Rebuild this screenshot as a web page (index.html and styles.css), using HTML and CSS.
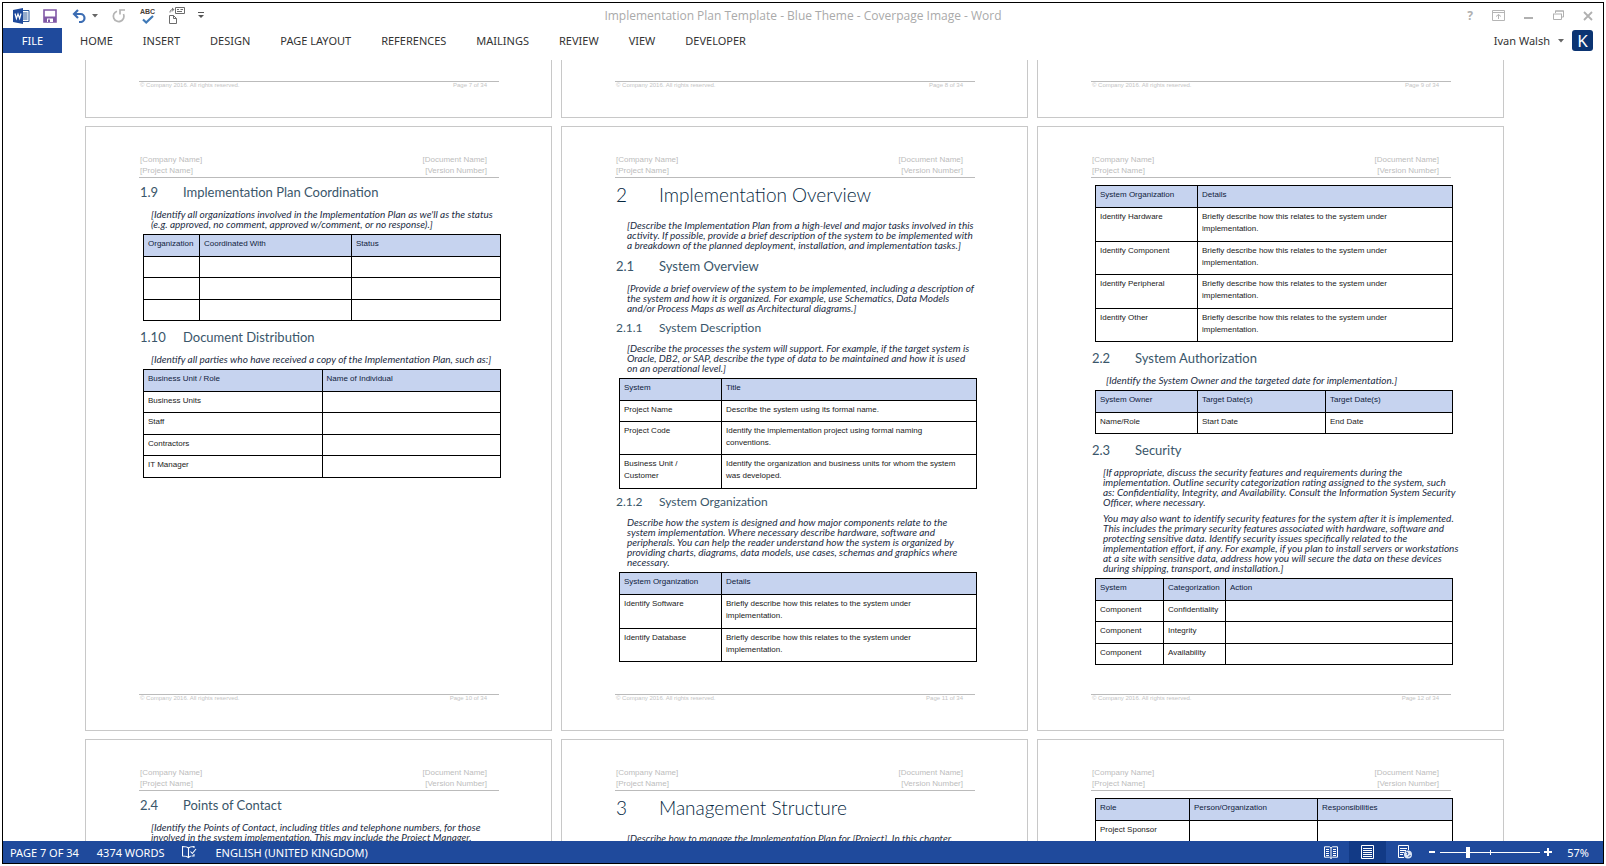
FILE: index.html
```html
<!DOCTYPE html>
<html lang="en-GB">
<head>
<meta charset="utf-8">
<title>Implementation Plan Template - Blue Theme - Coverpage Image - Word</title>
<link rel="stylesheet" href="styles.css">
</head>
<body>
<div class="window">
  <header class="titlebar">
    <div class="quick-access">
      <button class="icon-btn word" aria-label="Word"><svg width="17" height="16" viewBox="0 0 17 16"><path d="M8 2.5h8v11H8z" fill="#fff" stroke="#2a5699"/><path d="M9 5h5.500M9 7h5.500M9 9h5.500M9 11h5.500" stroke="#2a5699"/><path d="M0 2l10-2v16L0 14z" fill="#1f4a9c"/><path d="M2 5.500l1.400 5L5 6l1.600 4.500L8 5.500" fill="none" stroke="#fff" stroke-width="1.200"/></svg></button>
      <button class="icon-btn save" aria-label="Save"><svg width="14" height="14" viewBox="0 0 14 14"><path d="M1 1h12v12H1z" fill="#fff" stroke="#8058a5" stroke-width="1.600"/><path d="M1 7.500h12V13H1z" fill="#8058a5"/><path d="M4 9.500h6V13H4z" fill="#fff"/><path d="M5 10.500h2V13H5z" fill="#8058a5"/></svg></button>
      <button class="icon-btn undo" aria-label="Undo"><svg width="15" height="14" viewBox="0 0 15 14"><path d="M6 1L2 5l4 4M2 5h6.500a4 4 0 0 1 0 8H7" fill="none" stroke="#3c6db3" stroke-width="2.200"/></svg></button>
      <button class="icon-btn undo-more" aria-label="Undo history"><svg width="6" height="4" viewBox="0 0 6 4"><path d="M0 0h6L3 3.500z" fill="#666"/></svg></button>
      <button class="icon-btn redo" aria-label="Repeat"><svg width="14" height="14" viewBox="0 0 14 14"><path d="M5 2.200A5.300 5.300 0 1 0 11.500 5M8 5.500V1h5" fill="none" stroke="#b4b4b4" stroke-width="1.700"/></svg></button>
      <button class="icon-btn spell" aria-label="Spelling"><span class="abc">ABC</span><svg width="12" height="9" viewBox="0 0 12 9"><path d="M1 4.500l3.200 3L11 1" fill="none" stroke="#3f79b7" stroke-width="2.200"/></svg></button>
      <button class="icon-btn envelope" aria-label="Envelopes"><svg width="17" height="17" viewBox="0 0 17 17"><path d="M7.500.5h9v6h-9zM9 2.500h2M12.500 2.500h2.500M9 4.500h5M1.500 8.500h4l3 3v5h-7zM5.500 8.500v3h3" fill="none" stroke="#6c6c6c"/><path d="M2 5.500c0-2 1-3 3.500-3M4 1l1.800 1.500L4 4.500" fill="none" stroke="#6c6c6c"/></svg></button>
      <button class="icon-btn customize" aria-label="Customize toolbar"><svg width="6" height="7" viewBox="0 0 6 7"><path d="M0 .5h6" stroke="#555"/><path d="M0 3h6L3 6z" fill="#555"/></svg></button>
    </div>
    <h1 class="doc-title">Implementation Plan Template - Blue Theme - Coverpage Image - Word</h1>
    <div class="window-controls">
      <button class="icon-btn help" aria-label="Help">?</button>
      <button class="icon-btn" aria-label="Ribbon display"><svg width="13" height="11" viewBox="0 0 13 11"><path d="M.5.500h12v10H.5zM.5 2.500h12M6.500 9V4.500M4 6.500l2.500-2L9 6.500" fill="none" stroke="#b5b5b5"/></svg></button>
      <button class="icon-btn" aria-label="Minimize"><svg width="10" height="11" viewBox="0 0 10 11"><path d="M0 8h9" stroke="#b0b0b0" stroke-width="2"/></svg></button>
      <button class="icon-btn" aria-label="Restore"><svg width="11" height="11" viewBox="0 0 11 11"><path d="M2.500 3V1h8v6h-2M2 1h9M0 4h9M.5 4v5.500h8V4" fill="none" stroke="#b0b0b0"/></svg></button>
      <button class="icon-btn" aria-label="Close"><svg width="10" height="10" viewBox="0 0 10 10"><path d="M1 1l8 8M9 1L1 9" stroke="#b0b0b0" stroke-width="1.800"/></svg></button>
    </div>
  </header>
  <nav class="ribbon">
    <button class="file-tab">FILE</button>
    <button class="tab">HOME</button>
    <button class="tab">INSERT</button>
    <button class="tab">DESIGN</button>
    <button class="tab">PAGE LAYOUT</button>
    <button class="tab">REFERENCES</button>
    <button class="tab">MAILINGS</button>
    <button class="tab">REVIEW</button>
    <button class="tab">VIEW</button>
    <button class="tab">DEVELOPER</button>
    <button class="account">Ivan Walsh<svg width="6" height="4" viewBox="0 0 6 4"><path d="M0 0h6L3 3.500z" fill="#666"/></svg><span class="avatar">K</span></button>
  </nav>

  <main class="canvas">
    <div class="page-row">
      <article class="page tail"><footer class="page-foot"><span>© Company 2016. All rights reserved.</span><span>Page 7 of 34</span></footer></article>
      <article class="page tail"><footer class="page-foot"><span>© Company 2016. All rights reserved.</span><span>Page 8 of 34</span></footer></article>
      <article class="page tail"><footer class="page-foot"><span>© Company 2016. All rights reserved.</span><span>Page 9 of 34</span></footer></article>
    </div>

    <div class="page-row">
      <article class="page">
        <header class="page-head"><div>[Company Name]<br>[Project Name]</div><div class="end">[Document Name]<br>[Version Number]</div></header>
        <section class="content">
          <h3><span class="num">1.9</span>Implementation Plan Coordination</h3>
          <p>[Identify all organizations involved in the Implementation Plan as we'll as the status<br>(e.g. approved, no comment, approved w/comment, or no response).]</p>
          <table>
            <colgroup><col class="w56"><col class="w152"><col></colgroup>
            <thead><tr><th>Organization</th><th>Coordinated With</th><th>Status</th></tr></thead>
            <tbody><tr><td></td><td></td><td></td></tr><tr><td></td><td></td><td></td></tr><tr><td></td><td></td><td></td></tr></tbody>
          </table>
          <h3><span class="num">1.10</span>Document Distribution</h3>
          <p>[Identify all parties who have received a copy of the Implementation Plan, such as:]</p>
          <table>
            <colgroup><col class="half"><col></colgroup>
            <thead><tr><th>Business Unit / Role</th><th>Name of Individual</th></tr></thead>
            <tbody><tr><td>Business Units</td><td></td></tr><tr><td>Staff</td><td></td></tr><tr><td>Contractors</td><td></td></tr><tr><td>IT Manager</td><td></td></tr></tbody>
          </table>
        </section>
        <footer class="page-foot"><span>© Company 2016. All rights reserved.</span><span>Page 10 of 34</span></footer>
      </article>

      <article class="page">
        <header class="page-head"><div>[Company Name]<br>[Project Name]</div><div class="end">[Document Name]<br>[Version Number]</div></header>
        <section class="content">
          <h2><span class="num">2</span>Implementation Overview</h2>
          <p>[Describe the Implementation Plan from a high-level and major tasks involved in this<br>activity. If possible, provide a brief description of the system to be implemented with<br>a breakdown of the planned deployment, installation, and implementation tasks.]</p>
          <h3><span class="num">2.1</span>System Overview</h3>
          <p>[Provide a brief overview of the system to be implemented, including a description of<br>the system and how it is organized. For example, use Schematics, Data Models<br>and/or Process Maps as well as Architectural diagrams.]</p>
          <h4><span class="num">2.1.1</span>System Description</h4>
          <p>[Describe the processes the system will support. For example, if the target system is<br>Oracle, DB2, or SAP, describe the type of data to be maintained and how it is used<br>on an operational level.]</p>
          <table>
            <colgroup><col class="w102"><col></colgroup>
            <thead><tr><th>System</th><th>Title</th></tr></thead>
            <tbody><tr><td>Project Name</td><td>Describe the system using its formal name.</td></tr>
            <tr class="tall"><td>Project Code</td><td>Identify the implementation project using formal naming<br>conventions.</td></tr>
            <tr class="tall"><td>Business Unit /<br>Customer</td><td>Identify the organization and business units for whom the system<br>was developed.</td></tr></tbody>
          </table>
          <h4><span class="num">2.1.2</span>System Organization</h4>
          <p>Describe how the system is designed and how major components relate to the<br>system implementation. Where necessary describe hardware, software and<br>peripherals. You can help the reader understand how the system is organized by<br>providing charts, diagrams, data models, use cases, schemas and graphics where<br>necessary.</p>
          <table>
            <colgroup><col class="w102"><col></colgroup>
            <thead><tr><th>System Organization</th><th>Details</th></tr></thead>
            <tbody><tr class="tall"><td>Identify Software</td><td>Briefly describe how this relates to the system under<br>implementation.</td></tr>
            <tr class="tall"><td>Identify Database</td><td>Briefly describe how this relates to the system under<br>implementation.</td></tr></tbody>
          </table>
        </section>
        <footer class="page-foot"><span>© Company 2016. All rights reserved.</span><span>Page 11 of 34</span></footer>
      </article>

      <article class="page">
        <header class="page-head"><div>[Company Name]<br>[Project Name]</div><div class="end">[Document Name]<br>[Version Number]</div></header>
        <section class="content">
          <table>
            <colgroup><col class="w102"><col></colgroup>
            <thead><tr><th>System Organization</th><th>Details</th></tr></thead>
            <tbody><tr class="tall"><td>Identify Hardware</td><td>Briefly describe how this relates to the system under<br>implementation.</td></tr>
            <tr class="tall"><td>Identify Component</td><td>Briefly describe how this relates to the system under<br>implementation.</td></tr>
            <tr class="tall"><td>Identify Peripheral</td><td>Briefly describe how this relates to the system under<br>implementation.</td></tr>
            <tr class="tall"><td>Identify Other</td><td>Briefly describe how this relates to the system under<br>implementation.</td></tr></tbody>
          </table>
          <h3><span class="num">2.2</span>System Authorization</h3>
          <p class="indented">[Identify the System Owner and the targeted date for implementation.]</p>
          <table>
            <colgroup><col class="w102"><col class="w128"><col></colgroup>
            <thead><tr><th>System Owner</th><th>Target Date(s)</th><th>Target Date(s)</th></tr></thead>
            <tbody><tr><td>Name/Role</td><td>Start Date</td><td>End Date</td></tr></tbody>
          </table>
          <h3><span class="num">2.3</span>Security</h3>
          <p>[If appropriate, discuss the security features and requirements during the<br>implementation. Outline security categorization rating assigned to the system, such<br>as: Confidentiality, Integrity, and Availability. Consult the Information System Security<br>Officer, where necessary.</p>
          <p>You may also want to identify security features for the system after it is implemented.<br>This includes the primary security features associated with hardware, software and<br>protecting sensitive data. Identify security issues specifically related to the<br>implementation effort, if any. For example, if you plan to install servers or workstations<br>at a site with sensitive data, address how you will secure the data on these devices<br>during shipping, transport, and installation.]</p>
          <table>
            <colgroup><col class="w68"><col class="w62"><col></colgroup>
            <thead><tr><th>System</th><th>Categorization</th><th>Action</th></tr></thead>
            <tbody><tr><td>Component</td><td>Confidentiality</td><td></td></tr><tr><td>Component</td><td>Integrity</td><td></td></tr><tr><td>Component</td><td>Availability</td><td></td></tr></tbody>
          </table>
        </section>
        <footer class="page-foot"><span>© Company 2016. All rights reserved.</span><span>Page 12 of 34</span></footer>
      </article>
    </div>

    <div class="page-row">
      <article class="page">
        <header class="page-head"><div>[Company Name]<br>[Project Name]</div><div class="end">[Document Name]<br>[Version Number]</div></header>
        <section class="content">
          <h3><span class="num">2.4</span>Points of Contact</h3>
          <p>[Identify the Points of Contact, including titles and telephone numbers, for those<br>involved in the system implementation. This may include the Project Manager,</p>
        </section>
      </article>
      <article class="page">
        <header class="page-head"><div>[Company Name]<br>[Project Name]</div><div class="end">[Document Name]<br>[Version Number]</div></header>
        <section class="content">
          <h2><span class="num">3</span>Management Structure</h2>
          <p>[Describe how to manage the Implementation Plan for [Project]. In this chapter,</p>
        </section>
      </article>
      <article class="page">
        <header class="page-head"><div>[Company Name]<br>[Project Name]</div><div class="end">[Document Name]<br>[Version Number]</div></header>
        <section class="content">
          <table>
            <colgroup><col class="w94"><col class="w128"><col></colgroup>
            <thead><tr><th>Role</th><th>Person/Organization</th><th>Responsibilities</th></tr></thead>
            <tbody><tr><td>Project Sponsor</td><td></td><td></td></tr><tr><td></td><td></td><td></td></tr></tbody>
          </table>
        </section>
      </article>
    </div>
  </main>

  <footer class="statusbar">
    <button class="status-item">PAGE 7 OF 34</button>
    <button class="status-item">4374 WORDS</button>
    <button class="status-item" aria-label="Proofing"><svg width="15" height="14" viewBox="0 0 15 14"><path d="M6.500 3v9.500M6.500 3C5 1.500 3 1.500.5 1.500v9.500c2.500 0 4.500 0 6 1.500 1-1 2-1.500 3-1.500M6.500 3C8 1.500 10 1.500 12 1.500v1.500M8.500 6.500l1.800 2L14 4M10 11h2v-2" fill="none" stroke="#fff" stroke-width="1.100"/></svg></button>
    <button class="status-item">ENGLISH (UNITED KINGDOM)</button>
    <div class="view-tools">
      <button class="view" aria-label="Read mode"><svg width="14" height="13" viewBox="0 0 14 13"><path d="M7 2v10.500M7 2L5.500.8H.5v10.400h5L7 12.500l1.500-1.300h5V.8h-5zM2 3.500h3M2 5.500h3M2 7.500h3M2 9.500h3M9 3.500h3M9 5.500h3M9 7.500h3M9 9.500h3" fill="none" stroke="#fff"/></svg></button>
      <button class="view selected" aria-label="Print layout"><svg width="13" height="14" viewBox="0 0 13 14"><path d="M.5.500h12v13H.5zM2 3.500h9M2 5.500h9M2 7.500h9M2 9.500h9M2 11.500h9" fill="none" stroke="#fff"/></svg></button>
      <button class="view" aria-label="Web layout"><svg width="14" height="14" viewBox="0 0 14 14"><path d="M6 12.500H.5V.5h10V5M2 3.500h7M2 5.500h6M2 7.500h4M2 9.500h3" fill="none" stroke="#fff"/><circle cx="10" cy="9.500" r="4" fill="#dbe5f5"/><path d="M8 7l2 1-1 2M10.500 12l2-2" stroke="#1f4a9c" fill="none"/></svg></button>
      <button class="zoom-step out" aria-label="Zoom out"><svg width="8" height="8" viewBox="0 0 8 8"><path d="M1 4h6" stroke="#fff" stroke-width="2"/></svg></button>
      <input class="zoom-slider" type="range" min="0" max="100" value="27" aria-label="Zoom">
      <button class="zoom-step" aria-label="Zoom in"><svg width="8" height="8" viewBox="0 0 8 8"><path d="M0 4h8M4 0v8" stroke="#fff" stroke-width="2"/></svg></button>
      <button class="zoom-value">57%</button>
    </div>
  </footer>
</div>
</body>
</html>
```
FILE: styles.css
```css
* { box-sizing: border-box; }
body {
  margin: 0;
  padding: 2px;
  height: 100vh;
  background: #fff;
  font-family: "Noto Sans", "Open Sans", sans-serif;
  font-size: 11px;
  color: #333;
}
button {
  border: 0;
  padding: 0;
  margin: 0;
  background: none;
  font: inherit;
  color: inherit;
  white-space: nowrap;
}
svg { display: block; }

.window {
  height: 100%;
  border: 1px solid #000;
  display: flex;
  flex-direction: column;
  overflow: hidden;
}

/* Title bar */
.titlebar {
  flex: none;
  height: 25px;
  display: grid;
  grid-template-columns: 1fr auto 1fr;
  align-items: center;
  padding: 0 10px;
}
.quick-access { display: flex; align-items: center; }
.save { margin-left: 13px; }
.undo { margin-left: 15px; }
.undo-more { margin-left: 5px; }
.redo { margin-left: 14px; }
.spell { margin-left: 14px; width: 15px; display: flex; flex-direction: column; align-items: center; }
.abc { font: bold 7px/7px "Liberation Sans", sans-serif; color: #4a4038; }
.envelope { margin-left: 13px; }
.customize { margin-left: 13px; }
.doc-title { margin: 0; font-family: "Open Sans", sans-serif; font-size: 12px; font-weight: 400; color: #aaa; white-space: nowrap; }
.window-controls { display: flex; justify-content: flex-end; align-items: center; gap: 19px; }
.help { font-size: 12px; font-weight: 700; color: #b0b0b0; }

/* Ribbon tabs */
.ribbon { flex: none; display: flex; height: 32px; padding-right: 10px; align-items: flex-start; }
.ribbon button { height: 25px; line-height: 24px; }
.file-tab { width: 59px; background: #1f4a9c; color: #fff; margin-right: 3px; }
.tab { padding: 0 15px; }
.ribbon .account { margin-left: auto; display: flex; align-items: center; gap: 8px; }
.avatar {
  width: 21px;
  height: 21px;
  border-radius: 3px;
  background: #0b3472;
  color: #fff;
  font-size: 17px;
  line-height: 21px;
  text-align: center;
}

/* Document pages */
.canvas {
  flex: 1;
  min-height: 0;
  overflow: hidden;
  padding: 0 99px 0 82px;
  display: flex;
  flex-direction: column;
  gap: 8px;
}
.page-row { flex: none; display: grid; grid-template-columns: repeat(3, minmax(0, 1fr)); gap: 9px; }
.page {
  min-height: 605px;
  padding: 27px 52px 28px 53px;
  border: 1px solid #c8c8c8;
  display: flex;
  flex-direction: column;
  font-family: "Liberation Sans", sans-serif;
  font-size: 8px;
  white-space: nowrap;
}
.page.tail { min-height: 58px; padding-top: 0; border-top: 0; }
.page-head {
  display: flex;
  justify-content: space-between;
  padding: 0 12px 1px 1px;
  border-bottom: 1px solid #bbb;
  line-height: 11px;
  color: #bdbdbd;
}
.end { text-align: right; }
.page-foot {
  margin-top: auto;
  display: flex;
  justify-content: space-between;
  padding: 0 12px 0 1px;
  border-top: 1px solid #bbb;
  font-size: 6px;
  line-height: 7px;
  color: #c4c4c4;
}
.content { padding-top: 6px; }
.content h2, .content h3, .content h4 {
  display: flex;
  padding-left: 1px;
  font-family: Lato, sans-serif;
  font-weight: 400;
  color: #3a566a;
}
.content h2 { margin: 0 0 14px; font-size: 19px; font-weight: 300; line-height: 22px; color: #06283f; }
.content h3 { margin: 8px 0 9px; font-size: 13px; line-height: 16px; }
.content h4 { margin: 8px 0; font-size: 12px; line-height: 14px; }
.content h3:first-child { margin-top: 0; }
.content table + h4 { margin-top: 6px; }
.num { flex: none; width: 43px; }
.content p {
  margin: 0 0 5px;
  padding-left: 12px;
  font-family: Lato, sans-serif;
  font-size: 10px;
  font-style: italic;
  line-height: 10px;
  color: #1c2c44;
}
.content p.indented { padding-left: 15px; }
.content p + p { margin-top: 6px; }

table {
  width: calc(100% - 2px);
  min-width: 358px;
  margin-left: 4px;
  border-collapse: collapse;
  table-layout: fixed;
  line-height: 12px;
  color: #222;
}
table:first-child { margin-top: 1px; }
th, td {
  height: 21px;
  padding: 3px 0 0 4px;
  border: 1px solid #000;
  font-weight: 400;
  text-align: left;
  vertical-align: top;
}
th { height: 22px; background: #c6d3ef; color: #101c3c; }
tbody tr:nth-child(even) td { height: 22px; }
tbody tr.tall:nth-child(even) td { height: 33px; }
tbody tr.tall:nth-child(odd) td { height: 34px; }
.w56 { width: 56px; }
.w62 { width: 62px; }
.w68 { width: 68px; }
.w94 { width: 94px; }
.w102 { width: 102px; }
.w128 { width: 128px; }
.w152 { width: 152px; }
.half { width: 50%; }

/* Status bar */
.statusbar {
  flex: none;
  height: 22px;
  padding: 0 14px 0 7px;
  display: flex;
  align-items: center;
  gap: 18px;
  background: #1f4a9c;
  color: #fff;
}
.view-tools { margin-left: auto; display: flex; align-items: center; height: 100%; }
.view { width: 37px; height: 100%; display: flex; align-items: center; justify-content: center; }
.view.selected { background: #123a86; }
.zoom-step.out { margin-left: 5px; }
.zoom-slider {
  appearance: none;
  width: 100px;
  height: 14px;
  margin: 0 4px;
  background:
    linear-gradient(#fff, #fff) center / 1px 5px no-repeat,
    linear-gradient(#fff, #fff) center / 100% 1px no-repeat;
}
.zoom-slider::-webkit-slider-thumb { appearance: none; width: 4px; height: 11px; background: #fff; }
.zoom-value { margin-left: 15px; }
```
